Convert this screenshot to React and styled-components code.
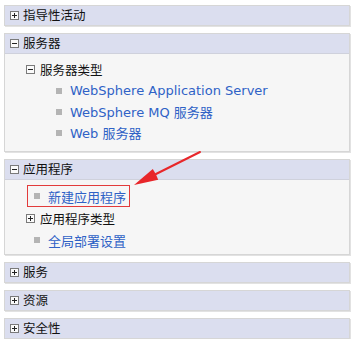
import React from 'react';
import styled, { createGlobalStyle } from 'styled-components';

const GlobalStyle = createGlobalStyle`
  body {
    margin: 0;
    background: #fff;
    font-family: "DejaVu Sans", "Noto Sans CJK SC", sans-serif;
  }
`;

function App() {
  return (
    <Page>
      <GlobalStyle />
      <Panel>
        <Header>
          <Toggle />
          指导性活动
        </Header>
      </Panel>

      <Panel>
        <Header $open>
          <Toggle $open />
          服务器
        </Header>
        <Body $rowH={21} $padTop={5} $padBottom={8}>
          <Row $indent={21}>
            <Toggle $open />
            <GroupLabel>服务器类型</GroupLabel>
          </Row>
          <Row $indent={51}>
            <Bullet />
            <Link>WebSphere Application Server</Link>
          </Row>
          <Row $indent={51}>
            <Bullet />
            <Link>WebSphere MQ 服务器</Link>
          </Row>
          <Row $indent={51}>
            <Bullet />
            <Link>Web 服务器</Link>
          </Row>
        </Body>
      </Panel>

      <Panel>
        <Header $open>
          <Toggle $open />
          应用程序
        </Header>
        <Body $rowH={22} $padTop={5} $padBottom={3}>
          <Row $indent={22}>
            <Marked>
              <Bullet />
              <Link>新建应用程序</Link>
            </Marked>
          </Row>
          <Row $indent={21}>
            <Toggle />
            <GroupLabel>应用程序类型</GroupLabel>
          </Row>
          <Row $indent={29}>
            <Bullet />
            <Link>全局部署设置</Link>
          </Row>
        </Body>
      </Panel>

      <Panel>
        <Header>
          <Toggle />
          服务
        </Header>
      </Panel>
      <Panel>
        <Header>
          <Toggle />
          资源
        </Header>
      </Panel>
      <Panel>
        <Header>
          <Toggle />
          安全性
        </Header>
      </Panel>

      <Arrow viewBox="0 0 80 50" width="80" height="50">
        <path d="M69 3 L25 25" stroke="#e8262a" strokeWidth="2" strokeLinecap="round" />
        <path d="M3 36 L21.8 19.9 L25 25.5 L27.2 30.7 Z" fill="#e8262a" />
      </Arrow>
    </Page>
  );
}

export default App;

const Page = styled.div`
  position: relative;
  display: flex;
  flex-direction: column;
  gap: 7px;
  width: 346px;
  padding: 5px 0 0 4px;
`;

const Panel = styled.section`
  border: 1px solid #d6d6d6;
  box-shadow: 1px 1px 0 #e2e2e2;
  background: #f6f6f6;
`;

const Header = styled.div`
  display: flex;
  align-items: center;
  gap: 4px;
  height: 19px;
  padding-left: 5px;
  background: #dbdeef;
  border-bottom: ${(p) => (p.$open ? '1px solid #cfd1dc' : 'none')};
  font-size: 12.5px;
  line-height: 19px;
  color: #111;
`;

const Toggle = styled.span`
  position: relative;
  flex: none;
  width: 7px;
  height: 7px;
  border: 1px solid #7a7a7a;
  background: #fafafa;

  &::before {
    content: '';
    position: absolute;
    left: 1px;
    top: 3px;
    width: 5px;
    height: 1px;
    background: #222;
  }

  &::after {
    content: '';
    position: absolute;
    left: 3px;
    top: 1px;
    width: 1px;
    height: 5px;
    background: #222;
    display: ${(p) => (p.$open ? 'none' : 'block')};
  }
`;

const Body = styled.div`
  display: flex;
  flex-direction: column;
  padding: ${(p) => p.$padTop}px 0 ${(p) => p.$padBottom}px 0;

  & > * {
    height: ${(p) => p.$rowH}px;
  }
`;

const Row = styled.div`
  display: flex;
  align-items: center;
  gap: 5px;
  padding-left: ${(p) => p.$indent}px;
  font-size: 12.5px;
`;

const GroupLabel = styled.span`
  color: #111;
`;

const Bullet = styled.span`
  flex: none;
  width: 6px;
  height: 6px;
  margin-right: 3px;
  background: #b4b4b4;
`;

const Link = styled.span`
  color: #2f62c6;
  font-size: 13px;
  white-space: nowrap;
`;

const Marked = styled.div`
  display: flex;
  align-items: center;
  align-self: stretch;
  gap: 5px;
  box-sizing: border-box;
  padding: 0 3px 0 6px;
  border: 1px solid #e23b3b;
`;

const Arrow = styled.svg`
  position: absolute;
  left: 131px;
  top: 149px;
  overflow: visible;
`;
